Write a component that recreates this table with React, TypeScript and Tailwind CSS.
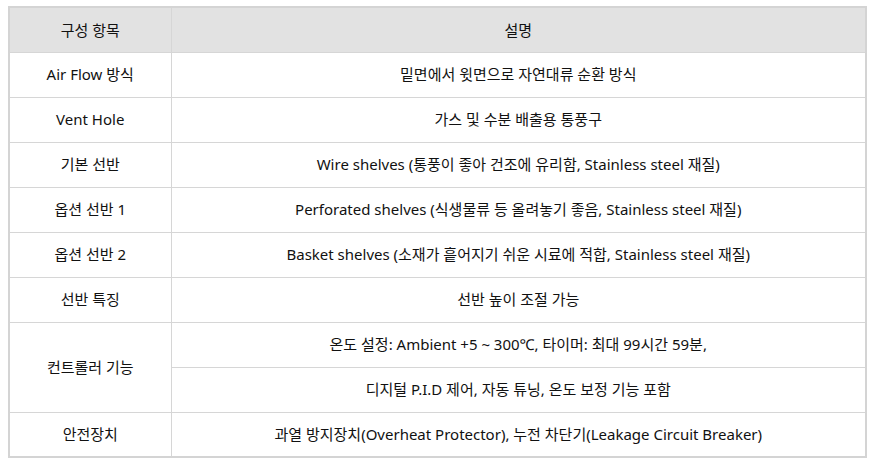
const rows: { label: string; desc: string[] }[] = [
  { label: 'Air Flow 방식', desc: ['밑면에서 윗면으로 자연대류 순환 방식'] },
  { label: 'Vent Hole', desc: ['가스 및 수분 배출용 통풍구'] },
  { label: '기본 선반', desc: ['Wire shelves (통풍이 좋아 건조에 유리함, Stainless steel 재질)'] },
  { label: '옵션 선반 1', desc: ['Perforated shelves (식생물류 등 올려놓기 좋음, Stainless steel 재질)'] },
  { label: '옵션 선반 2', desc: ['Basket shelves (소재가 흩어지기 쉬운 시료에 적합, Stainless steel 재질)'] },
  { label: '선반 특징', desc: ['선반 높이 조절 가능'] },
  {
    label: '컨트롤러 기능',
    desc: ['온도 설정: Ambient +5 ~ 300℃, 타이머: 최대 99시간 59분,', '디지털 P.I.D 제어, 자동 튜닝, 온도 보정 기능 포함'],
  },
  { label: '안전장치', desc: ['과열 방지장치(Overheat Protector), 누전 차단기(Leakage Circuit Breaker)'] },
]

const cell = 'border border-[#d6d6d6] text-center align-middle h-[45px] p-0'

export default function App() {
  return (
    <div className="bg-white w-[876px] h-[465px] pt-[6px] pl-[8px] font-['Noto_Sans','Noto_Sans_CJK_KR',sans-serif] text-[15px] text-[#111]">
      <table className="w-[859px] border-collapse border-2 border-[#d4d4d4] table-fixed">
        <colgroup>
          <col className="w-[162px]" />
          <col />
        </colgroup>
        <thead>
          <tr className="bg-[#e2e2e2]">
            <th className={`${cell} font-normal h-[45px]`}>구성 항목</th>
            <th className={`${cell} font-normal`}>설명</th>
          </tr>
        </thead>
        <tbody>
          {rows.map(r =>
            r.desc.map((d, i) => (
              <tr key={r.label + i}>
                {i === 0 && (
                  <td rowSpan={r.desc.length} className={cell}>
                    {r.label}
                  </td>
                )}
                <td className={cell}>{d}</td>
              </tr>
            ))
          )}
        </tbody>
      </table>
    </div>
  )
}
